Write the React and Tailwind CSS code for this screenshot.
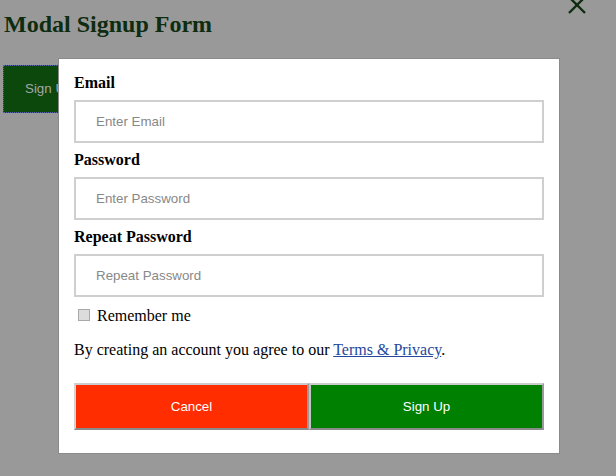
import React from "react";

const serif = { fontFamily: '"Liberation Serif", "Times New Roman", serif' };

function Field({ label, placeholder, type = "text", first }) {
  return (
    <div className={first ? "flex flex-col" : "flex flex-col mt-[7px]"}>
      <label className="block h-[20px] text-[16px] leading-[20px] font-bold text-black font-['Liberation_Serif',serif]">
        {label}
      </label>
      <input
        type={type}
        placeholder={placeholder}
        className="mt-[7px] h-[43px] w-full border-2 border-[#cfcfcf] bg-white pl-[20px] pr-[15px] text-[13.33px] text-black outline-none placeholder:text-[#888888] font-['Liberation_Sans',Arial,sans-serif]"
      />
    </div>
  );
}

export default function App() {
  return (
    <div className="relative w-[616px] h-[476px] overflow-hidden bg-[#999999]" style={serif}>
      <div className="flex flex-col pl-[4px] pt-[10px]">
        <h2 className="h-[28px] text-[24px] leading-[28px] font-bold text-[#0e2c0f] font-['Liberation_Serif',serif]">
          Modal Signup Form
        </h2>
        <button className="mt-[27px] -ml-[1px] h-[48px] w-[100px] border border-dotted border-[#5566aa] bg-[#0c470c] pl-[21px] text-left text-[13.33px] text-[#a6a6a6] font-['Liberation_Sans',Arial,sans-serif]">
          Sign Up
        </button>
      </div>

      <svg
        className="absolute left-[567px] top-[-5px]"
        width="20"
        height="20"
        viewBox="0 0 20 20"
        fill="none"
        stroke="#0e2c0f"
        strokeWidth="2.4"
        strokeLinecap="butt"
      >
        <line x1="2" y1="2" x2="18" y2="18" />
        <line x1="18" y1="2" x2="2" y2="18" />
      </svg>

      <div className="absolute left-[58px] top-[58px] w-[502px] h-[396px] border border-[#8a8a8a] bg-white px-[15px] pt-[14px] flex flex-col">
        <Field first label="Email" placeholder="Enter Email" />
        <Field label="Password" placeholder="Enter Password" type="password" />
        <Field label="Repeat Password" placeholder="Repeat Password" type="password" />

        <div className="mt-[9px] flex h-[20px] items-center">
          <span className="ml-[4px] mt-[-3px] h-[12px] w-[12px] border border-[#a8a8a8] bg-[#dcdcdc]" />
          <span className="ml-[7px] text-[16px] leading-[20px] text-black font-['Liberation_Serif',serif]">
            Remember me
          </span>
        </div>

        <p className="mt-[14px] h-[20px] text-[16px] leading-[20px] text-black font-['Liberation_Serif',serif]">
          By creating an account you agree to our{" "}
          <a href="#" className="text-[#25489b] underline">
            Terms &amp; Privacy
          </a>
          .
        </p>

        <div className="mt-[23px] flex h-[47px]">
          <button className="flex-1 border-2 border-t-[#cccccc] border-l-[#d4d4d4] border-b-[#8a8a8a] border-r-[#9a9a9a] bg-[#ff2d00] text-[13.33px] text-white font-['Liberation_Sans',Arial,sans-serif]">
            Cancel
          </button>
          <button className="flex-1 border-2 border-t-[#cccccc] border-l-[#c4c4c4] border-b-[#8a8a8a] border-r-[#9a9a9a] bg-[#008000] text-[13.33px] text-white font-['Liberation_Sans',Arial,sans-serif]">
            Sign Up
          </button>
        </div>
      </div>
    </div>
  );
}
